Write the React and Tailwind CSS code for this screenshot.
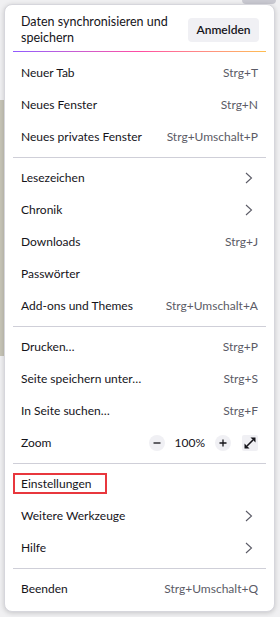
import React from "react";

const font = { fontFamily: '"Segoe UI", Lato, "Liberation Sans", sans-serif' };

function Chevron() {
  return (
    <svg width="8" height="12" viewBox="0 0 8 12" className="mr-[5px]">
      <path d="M1 1l5.5 5L1 11" fill="none" stroke="#5b5b66" strokeWidth="1.1" />
    </svg>
  );
}

function Row({ label, shortcut, arrow, children }) {
  return (
    <div className="relative flex h-[32px] items-center justify-between px-[8px] text-[12px] text-[#15141a]">
      {children}
      <span>{label}</span>
      {shortcut && <span className="text-[#5b5b66]">{shortcut}</span>}
      {arrow && <Chevron />}
    </div>
  );
}

function Sep() {
  return <div className="my-[4px] h-px bg-[#cfcfd8]" />;
}

function RoundBtn({ children }) {
  return (
    <div className="flex h-[16px] w-[16px] items-center justify-center rounded-full bg-[#f0f0f4]">
      {children}
    </div>
  );
}

export default function App() {
  return (
    <div className="relative h-[617px] w-[280px] overflow-hidden bg-[#f0f0f2]" style={font}>
      {/* page behind the menu */}
      <div className="absolute left-0 top-[100px] h-[256px] w-[4px] bg-[#c6c4b6]" />
      <div className="absolute right-[4px] top-[-6px] h-[10px] w-[34px] rounded-[4px] bg-[#c9c9d1]" />

      <div className="relative ml-[4px] mt-[4px] w-[271px] rounded-[8px] border border-[#d6d6dc] bg-white px-[8px] pb-[6px] shadow-[0_1px_5px_rgba(0,0,0,0.18)]">
        {/* sync header */}
        <div className="flex items-center pt-[9px] pb-[5px]">
          <div className="flex-1 pl-[8px] text-[12.5px] leading-[16px] text-[#15141a]">
            Daten synchronisieren und speichern
          </div>
          <button className="mr-[7px] ml-[8px] h-[24px] w-[71px] rounded-[4px] bg-[#f0f0f4] text-[12px] font-semibold text-[#15141a]">
            Anmelden
          </button>
        </div>
        <div className="mb-[5px] h-px bg-gradient-to-r from-[#9059ff] via-[#ff4aa2] to-[#ffbd4f]" />

        <Row label="Neuer Tab" shortcut="Strg+T" />
        <Row label="Neues Fenster" shortcut="Strg+N" />
        <Row label="Neues privates Fenster" shortcut="Strg+Umschalt+P" />
        <Sep />
        <Row label="Lesezeichen" arrow />
        <Row label="Chronik" arrow />
        <Row label="Downloads" shortcut="Strg+J" />
        <Row label="Passwörter" />
        <Row label="Add-ons und Themes" shortcut="Strg+Umschalt+A" />
        <Sep />
        <Row label="Drucken…" shortcut="Strg+P" />
        <Row label="Seite speichern unter…" shortcut="Strg+S" />
        <Row label="In Seite suchen…" shortcut="Strg+F" />
        <div className="flex h-[32px] items-center px-[8px] text-[12px] text-[#15141a]">
          <span className="flex-1">Zoom</span>
          <RoundBtn>
            <svg width="10" height="10" viewBox="0 0 10 10">
              <path d="M1.5 5h7" stroke="#15141a" strokeWidth="1.3" />
            </svg>
          </RoundBtn>
          <span className="mx-[10px]">100%</span>
          <RoundBtn>
            <svg width="10" height="10" viewBox="0 0 10 10">
              <path d="M1.5 5h7M5 1.5v7" stroke="#15141a" strokeWidth="1.3" />
            </svg>
          </RoundBtn>
          <div className="ml-[11px] flex h-[16px] w-[16px] items-center justify-center rounded-[2px] bg-[#f0f0f4]">
            <svg width="14" height="14" viewBox="0 0 14 14">
              <path d="M4 10L10 4" stroke="#15141a" strokeWidth="1.6" />
              <path d="M12.5 1.5v5l-5-5z" fill="#15141a" />
              <path d="M1.5 12.5v-5l5 5z" fill="#15141a" />
            </svg>
          </div>
        </div>
        <Sep />
        <Row label="Einstellungen">
          <div className="absolute left-0 top-[5px] h-[21px] w-[94px] border-2 border-[#e8373d]" />
        </Row>
        <Row label="Weitere Werkzeuge" arrow />
        <Row label="Hilfe" arrow />
        <Sep />
        <Row label="Beenden" shortcut="Strg+Umschalt+Q" />
      </div>
    </div>
  );
}
